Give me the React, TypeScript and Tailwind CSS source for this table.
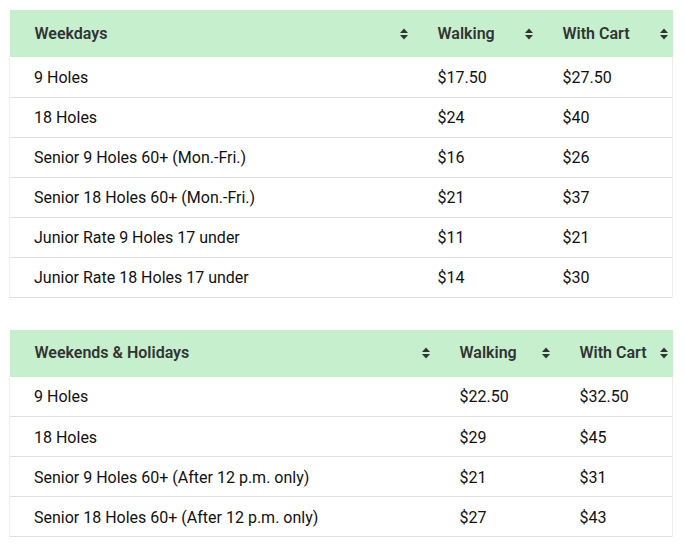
import React from "react";

type Table = {
  title: string;
  widths: [number, number, number];
  rows: [string, string, string][];
};

const tables: Table[] = [
  {
    title: "Weekdays",
    widths: [403, 125, 135],
    rows: [
      ["9 Holes", "$17.50", "$27.50"],
      ["18 Holes", "$24", "$40"],
      ["Senior 9 Holes 60+ (Mon.-Fri.)", "$16", "$26"],
      ["Senior 18 Holes 60+ (Mon.-Fri.)", "$21", "$37"],
      ["Junior Rate 9 Holes 17 under", "$11", "$21"],
      ["Junior Rate 18 Holes 17 under", "$14", "$30"],
    ],
  },
  {
    title: "Weekends & Holidays",
    widths: [425, 120, 118],
    rows: [
      ["9 Holes", "$22.50", "$32.50"],
      ["18 Holes", "$29", "$45"],
      ["Senior 9 Holes 60+ (After 12 p.m. only)", "$21", "$31"],
      ["Senior 18 Holes 60+ (After 12 p.m. only)", "$27", "$43"],
    ],
  },
];

function SortIcon() {
  return (
    <svg width="8" height="12" viewBox="0 0 8 12" className="absolute right-[5px] top-1/2 -translate-y-1/2">
      <path d="M4 0.5 L8 5 L0 5 Z" fill="#333" />
      <path d="M0 7 L8 7 L4 11.5 Z" fill="#333" />
    </svg>
  );
}

function PriceTable({ t }: { t: Table }) {
  const heads = [t.title, "Walking", "With Cart"];
  return (
    <table className="table-fixed border-collapse w-[663px]">
      <colgroup>
        {t.widths.map((w, i) => (
          <col key={i} style={{ width: w }} />
        ))}
      </colgroup>
      <thead>
        <tr className="bg-[#c6efce]">
          {heads.map((h, i) => (
            <th
              key={i}
              className="relative h-[47px] pl-[25px] pr-[20px] text-left text-[16px] font-semibold text-[#333] p-0"
            >
              {h}
              <SortIcon />
            </th>
          ))}
        </tr>
      </thead>
      <tbody>
        {t.rows.map((r, ri) => (
          <tr key={ri} className="border-b border-[#e0e0e0]">
            {r.map((c, ci) => (
              <td
                key={ci}
                className={`h-[40px] pt-[2px] text-[16px] text-[#111] ${ci === 0 ? "pl-[24px] border-l border-[#eee]" : "pl-[25px]"} ${ci === 2 ? "border-r border-[#eee]" : ""}`}
              >
                {c}
              </td>
            ))}
          </tr>
        ))}
      </tbody>
    </table>
  );
}

export default function App() {
  return (
    <div className="w-[684px] h-[553px] bg-white pl-[9px] pt-[10px] flex flex-col gap-[32px]" style={{ fontFamily: "Roboto, 'Liberation Sans', sans-serif" }}>
      {tables.map((t, i) => (
        <PriceTable key={i} t={t} />
      ))}
    </div>
  );
}
